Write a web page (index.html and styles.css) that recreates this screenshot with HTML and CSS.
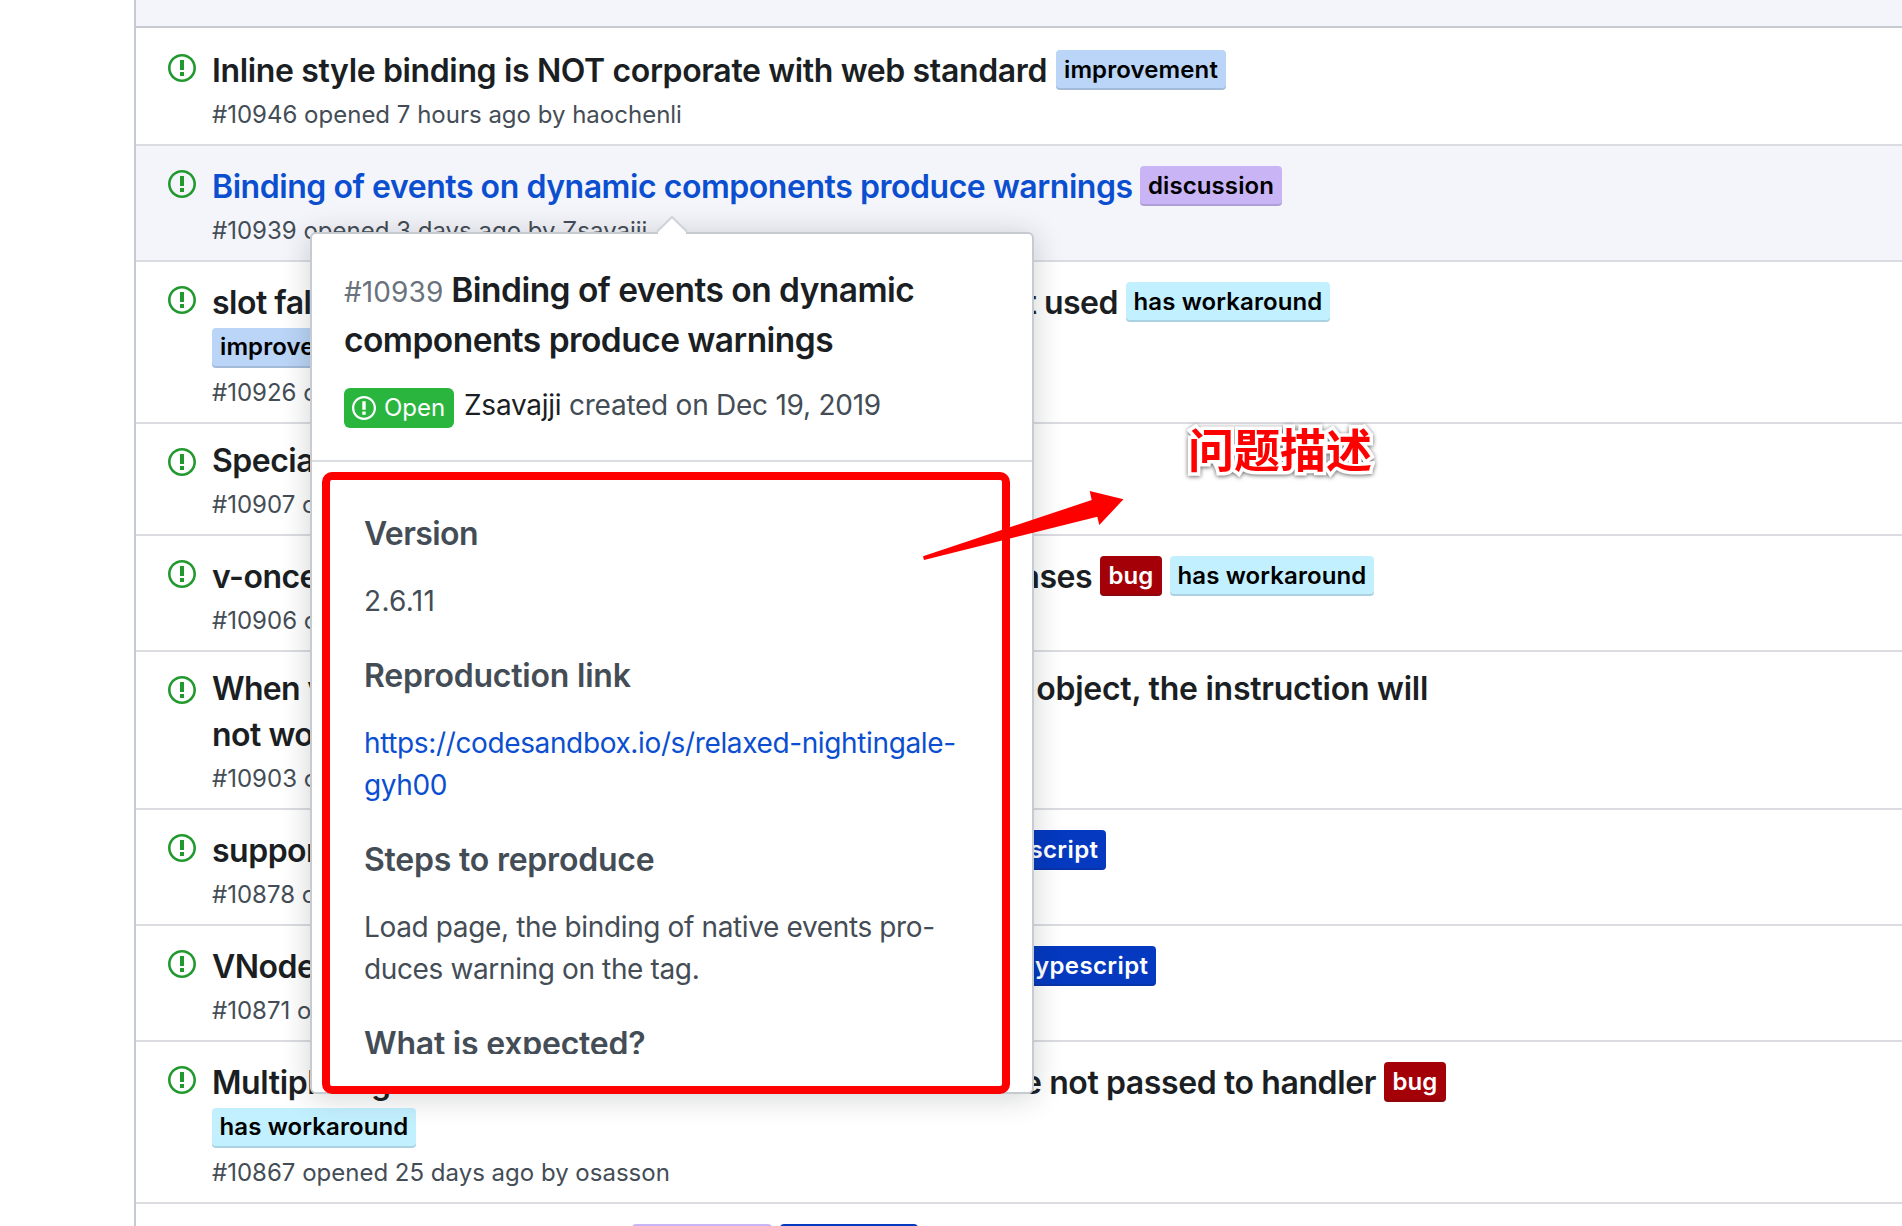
FILE: index.html
```
<!DOCTYPE html>
<html lang="en">
<head>
<meta charset="utf-8">
<title>Issues</title>
<link rel="stylesheet" href="styles.css">
</head>
<body>
<svg class="defs" aria-hidden="true"><symbol id="issue-opened" viewBox="0 0 14 16"><path d="M7 2.3c3.14 0 5.7 2.56 5.7 5.7s-2.56 5.7-5.7 5.7A5.71 5.71 0 011.3 8c0-3.14 2.56-5.7 5.7-5.7zM7 1C3.14 1 0 4.14 0 8s3.14 7 7 7 7-3.14 7-7-3.14-7-7-7zm1 3H6v5h2V4zm0 6H6v2h2v-2z"/></symbol></svg>
<main class="list">
  <div class="list-header"></div>
  <article class="row">
    <svg class="icon"><use href="#issue-opened"/></svg>
    <div class="body">
      <div class="line"><span class="title t1">Inline style binding is NOT corporate with web standard</span><span class="label improvement">improvement</span></div>
      <div class="meta">#10946 opened 7 hours ago by haochenli</div>
    </div>
  </article>
  <article class="row hover">
    <svg class="icon"><use href="#issue-opened"/></svg>
    <div class="body">
      <div class="line"><a class="title t2">Binding of events on dynamic components produce warnings</a><span class="label discussion">discussion</span></div>
      <div class="meta">#10939 opened 3 days ago by Zsavajji</div>
    </div>
  </article>
  <article class="row">
    <svg class="icon"><use href="#issue-opened"/></svg>
    <div class="body">
      <div class="line"><span class="title t3"><span>slot fallback</span><span>not used</span></span><span class="label workaround">has workaround</span></div>
      <div class="line"><span class="label improvement">improvement</span></div>
      <div class="meta">#10926 opened</div>
    </div>
  </article>
  <article class="row plain">
    <svg class="icon"><use href="#issue-opened"/></svg>
    <div class="body">
      <div class="line"><span class="title">Special</span></div>
      <div class="meta">#10907 opened</div>
    </div>
  </article>
  <article class="row">
    <svg class="icon"><use href="#issue-opened"/></svg>
    <div class="body">
      <div class="line"><span class="title t5"><span>v-once</span><span>cases</span></span><span class="label bug">bug</span><span class="label workaround">has workaround</span></div>
      <div class="meta">#10906 opened</div>
    </div>
  </article>
  <article class="row plain">
    <svg class="icon"><use href="#issue-opened"/></svg>
    <div class="body">
      <div class="line"><span class="title t6"><span class="start">When v</span><span>object, the instruction will</span></span></div>
      <div class="line"><span class="title">not work</span></div>
      <div class="meta">#10903 opened</div>
    </div>
  </article>
  <article class="row">
    <svg class="icon"><use href="#issue-opened"/></svg>
    <div class="body">
      <div class="line"><span class="title t7">support</span><span class="label typescript">typescript</span></div>
      <div class="meta">#10878 opened</div>
    </div>
  </article>
  <article class="row">
    <svg class="icon"><use href="#issue-opened"/></svg>
    <div class="body">
      <div class="line"><span class="title t8">VNode</span><span class="label typescript">typescript</span></div>
      <div class="meta">#10871 opened</div>
    </div>
  </article>
  <article class="row">
    <svg class="icon"><use href="#issue-opened"/></svg>
    <div class="body">
      <div class="line"><span class="title t9"><span>Multiple arguments from</span><span>event are not passed to handler</span></span><span class="label bug">bug</span></div>
      <div class="line"><span class="label workaround">has workaround</span></div>
      <div class="meta">#10867 opened 25 days ago by osasson</div>
    </div>
  </article>
  <article class="row">
    <div class="body last">
      <div class="line"><span class="title t10"></span><span class="label discussion"></span><span class="label typescript"></span></div>
    </div>
  </article>
</main>

<aside class="popover">
  <svg class="caret" viewBox="0 0 32 18"><path d="M2 16 16 2 30 16V18H2z" fill="#fff"/><path d="M1 15.5 16 1 31 15.5" fill="none" stroke="#cfd2d8" stroke-width="2"/></svg>
  <header class="pop-head">
    <h2><span class="num">#10939</span> Binding of events on dynamic<br>components produce warnings</h2>
    <div class="status"><span class="state"><svg class="state-icon"><use href="#issue-opened"/></svg><span class="state-text">Open</span></span><span class="byline"><b>Zsavajji</b> created on Dec 19, 2019</span></div>
  </header>
  <div class="pop-body">
    <h3 class="tight">Version</h3>
    <p class="version">2.6.11</p>
    <h3>Reproduction link</h3>
    <p class="url">https://codesandbox.io/s/relaxed-nightingale-<br>gyh00</p>
    <h3>Steps to reproduce</h3>
    <p>Load page, the binding of native events pro-<br>duces warning on the tag.</p>
    <h3>What is expected?</h3>
  </div>
</aside>
<div class="marker"></div>
<svg class="arrow" viewBox="0 0 220 90"><path d="M3 76.3 171.7 20 169.7 11 203.5 19.3 179.3 45 177.3 36.7 4 80z" fill="#f00"/></svg>
<div class="note">问题描述</div>
</body>
</html>
```
FILE: styles.css
```
* { box-sizing: border-box; }
body { margin: 0; width: 1902px; height: 1226px; overflow: hidden; position: relative; background: #fff; color: #1b1f23; font-family: Inter, "Liberation Sans", "Noto Sans CJK SC", sans-serif; }
.defs { position: absolute; width: 0; height: 0; }
.list { margin-left: 134px; height: 1226px; overflow: hidden; border-left: 2px solid #c6cbd1; }
.list-header { height: 28px; background: #f4f5fa; border-bottom: 2px solid #c6cbd1; }
.row { display: flex; padding: 20px 0 16px 32px; border-top: 2px solid #dadce1; }
.list-header + .row { border-top-color: transparent; }
.hover { background: #f4f5fa; }
.icon { flex: none; width: 28px; height: 32px; margin: 2px 16px 0 0; fill: #22992f; }
.body { width: 1300px; }
.last { padding-left: 44px; }
.line { display: flex; gap: 8px; height: 46px; font-size: 32px; line-height: 42px; font-weight: 600; white-space: nowrap; }
.plain .line { margin-top: -4px; }
.plain .line + .line { margin-top: 0; }
.title { display: flex; justify-content: space-between; flex: none; letter-spacing: -0.5px; }
.hover .title { color: #0b4fd0; }
.t1 { width: 836px; letter-spacing: -0.36px; }
.t2 { width: 920px; letter-spacing: -0.45px; }
.t3 { width: 906px; }
.t5 { width: 880px; }
.t6 { width: 1216px; letter-spacing: -0.25px; }
.start { letter-spacing: -0.7px; }
.t7 { width: 748px; }
.t8 { width: 798px; }
.t9 { width: 1164px; letter-spacing: -0.4px; }
.t10 { width: 412px; }
.label { flex: none; height: 40px; border-radius: 4px; text-align: center; font-size: 24px; line-height: 40px; letter-spacing: 0.1px; color: #000; box-shadow: inset 0 -2px 0 rgba(27,31,35,.14); }
.line + .line .label { line-height: 38px; }
.improvement { width: 170px; background: #bad5f7; }
.discussion { width: 142px; background: #c9b5f5; }
.last .discussion { width: 140px; }
.workaround { width: 204px; background: #c3f0ff; }
.bug { width: 62px; background: #a30008; color: #fff; }
.typescript { width: 138px; background: #0439c0; color: #fff; letter-spacing: 0.4px; }
.meta { height: 28px; margin-top: 4px; line-height: 29px; font-size: 24px; color: #444d56; white-space: nowrap; }

.popover { position: absolute; left: 310px; top: 232px; width: 724px; height: 862px; background: #fff; border: 2px solid #c6cbd1; border-radius: 6px; box-shadow: 0 3px 30px rgba(27,31,35,.2); }
.caret { position: absolute; left: 344px; top: -18px; width: 32px; height: 18px; }
.pop-head { height: 228px; padding: 31px 32px; border-bottom: 2px solid #dadde2; }
h2 { margin: 0; font-size: 33.5px; line-height: 50px; font-weight: 600; white-space: nowrap; letter-spacing: -0.54px; }
.num { font-size: 28px; line-height: 1; font-weight: 400; color: #6a737d; letter-spacing: 0.1px; }
.status { display: flex; gap: 10px; margin-top: 23px; }
.state { display: flex; align-items: center; gap: 8px; width: 110px; height: 40px; padding-left: 8px; border-radius: 6px; background: #2ab53f; color: #fff; font-size: 24px; }
.state-text { line-height: 28px; }
.state-icon { width: 24px; height: 28px; fill: #fff; }
.byline { font-size: 28px; line-height: 34px; letter-spacing: -0.25px; color: #444d56; white-space: nowrap; }
.byline b { font-weight: 400; color: #1b1f23; }
.pop-body { height: 592px; padding: 47px 52px 0; overflow: hidden; color: #444d56; }
h3 { margin: 0; font-size: 32px; line-height: 50px; font-weight: 600; letter-spacing: -0.22px; white-space: nowrap; }
.tight { letter-spacing: -0.6px; }
p { margin: 21px 0 29px; font-size: 28px; line-height: 42px; letter-spacing: -0.37px; white-space: nowrap; }
.version { letter-spacing: 0.3px; }
.url { color: #0b4fd0; }
.marker { position: absolute; left: 322px; top: 472px; width: 688px; height: 622px; border: 8px solid #f00; border-radius: 10px; }
.arrow { position: absolute; left: 920px; top: 480px; width: 220px; height: 90px; }
.note { position: absolute; left: 1188px; top: 413px; font: 700 46px/68px "Noto Sans CJK SC", sans-serif; color: #f00; white-space: nowrap; -webkit-text-stroke: 7px #fff; paint-order: stroke fill; filter: drop-shadow(0 1px 2px rgba(0,0,0,.6)); }
```
